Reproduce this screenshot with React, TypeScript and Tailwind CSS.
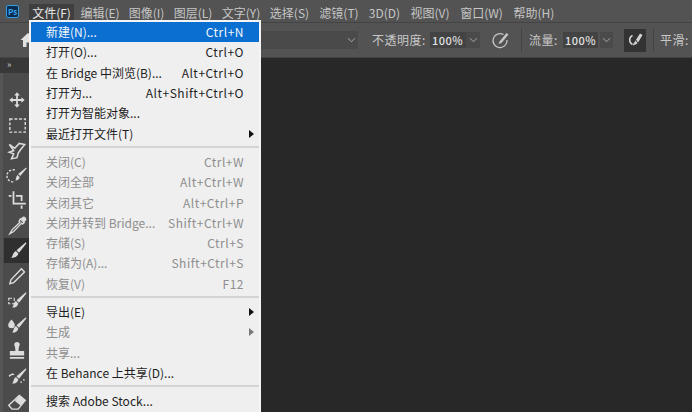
const FONT = 'font-["Noto_Sans_CJK_SC","Liberation_Sans",sans-serif]';

const MENUS = [
  ['文件(F)', 'w-[45px]'],
  ['编辑(E)', 'w-[48px] ml-[2px]'],
  ['图像(I)', 'w-[45px]'],
  ['图层(L)', 'w-[48px]'],
  ['文字(Y)', 'w-[48px]'],
  ['选择(S)', 'w-[49px]'],
  ['滤镜(T)', 'w-[50px]'],
  ['3D(D)', 'w-[41px]'],
  ['视图(V)', 'w-[50px]'],
  ['窗口(W)', 'w-[53px]'],
  ['帮助(H)', 'w-[50px] ml-[1px]'],
];

type Row = { label: string; key?: string; off?: boolean; arrow?: boolean; active?: boolean };

const GROUPS: Row[][] = [
  [
    { label: '新建(N)...', key: 'Ctrl+N', active: true },
    { label: '打开(O)...', key: 'Ctrl+O' },
    { label: '在 Bridge 中浏览(B)...', key: 'Alt+Ctrl+O' },
    { label: '打开为...', key: 'Alt+Shift+Ctrl+O' },
    { label: '打开为智能对象...' },
    { label: '最近打开文件(T)', arrow: true },
  ],
  [
    { label: '关闭(C)', key: 'Ctrl+W', off: true },
    { label: '关闭全部', key: 'Alt+Ctrl+W', off: true },
    { label: '关闭其它', key: 'Alt+Ctrl+P', off: true },
    { label: '关闭并转到 Bridge...', key: 'Shift+Ctrl+W', off: true },
    { label: '存储(S)', key: 'Ctrl+S', off: true },
    { label: '存储为(A)...', key: 'Shift+Ctrl+S', off: true },
    { label: '恢复(V)', key: 'F12', off: true },
  ],
  [
    { label: '导出(E)', arrow: true },
    { label: '生成', off: true, arrow: true },
    { label: '共享...', off: true },
    { label: '在 Behance 上共享(D)...' },
  ],
  [{ label: '搜索 Adobe Stock...' }],
];

function Chevron() {
  return (
    <svg width="9" height="6" viewBox="0 0 9 6" fill="none" stroke="#a8a8a8" strokeWidth="1">
      <path d="M1 1.2 4.5 4.8 8 1.2" />
    </svg>
  );
}

function Tool({ children, active }: { children: React.ReactNode; active?: boolean }) {
  return (
    <div className={`h-[25.2px] w-[25px] flex items-center justify-center ${active ? 'bg-[#2f2f2f]' : ''}`}>
      <svg width="22" height="22" viewBox="0 0 20 20" fill="#dcdcdc" stroke="none">
        {children}
      </svg>
    </div>
  );
}

const BRUSH = 'M17.5 2.5c.6-.5 1.2.1.8.8L11.8 11.5 9.6 9.4Z';

function Toolbar() {
  return (
    <div className="w-[29px] shrink-0 bg-[#4b4b4b] border-l-[3px] border-l-[#555555]">
      <div className="h-[15px] -ml-[3px] bg-[#383838] text-[#c8c8c8] text-[9px] leading-[13px] pl-[7px]">»</div>
      <div className="flex flex-col items-start pl-[1px] pt-[14px]">
        <Tool>
          <path d="M9.2 6h1.6v3.2H14V7.4l3 2.6-3 2.6v-1.8h-3.2V14h1.8L10 17l-2.6-3h1.8v-3.2H6v1.8L3 10l3-2.6v1.8h3.2V6H7.4L10 3l2.6 3Z" />
        </Tool>
        <Tool>
          <rect x="3.5" y="4.5" width="14" height="12" fill="none" stroke="#dcdcdc" strokeWidth="1.3" strokeDasharray="2.6 1.6" />
        </Tool>
        <Tool>
          <path d="M3 5l5 3.5L12 4l5 1-4 5-2 3-1 4-5 1 2-4.5L3 12l4-1.5Z" fill="none" stroke="#dcdcdc" strokeWidth="1.4" />
        </Tool>
        <Tool>
          <path d="M8 5.5A5.5 5.5 0 1 0 8 16" fill="none" stroke="#dcdcdc" strokeWidth="1.3" strokeDasharray="2 1.4" />
          <path d="M18 3.5c.5-.4 1 .1.7.6L13 11l-2-1.8ZM10.5 10l2 2c-.5 2-2 3-4 3 .9-1.500.4-3.700 2-5Z" />
        </Tool>
        <Tool>
          <path d="M6 2h1.600v10.400H18V14H6ZM2.500 5.500H5V7H2.500ZM9 5.500h6V11h-1.600V7H9ZM13.400 15H15v3h-1.600Z" />
        </Tool>
        <Tool>
          <path d="M13 3.500 16.500 7l-1.500 1.200-.8-.8L7 15l-3.500 2 2-3.500 7.200-7-.8-.8Z" fill="none" stroke="#dcdcdc" strokeWidth="1.200" />
          <path d="M14.500 2.200a2 2 0 0 1 3.300 3.300l-1.500 1.300-3.100-3.100Z" />
        </Tool>
        <Tool active>
          <path d={BRUSH} />
          <path d="M9 10l2.200 2.200c-.4 2.600-3 4.300-6.700 4 1.800-1 1.500-4.800 4.500-6.200Z" />
        </Tool>
        <Tool>
          <path d="M14 3.500 16.800 6.300 7 16l-3.500 1 1-3.500Z" fill="none" stroke="#dcdcdc" strokeWidth="1.300" />
        </Tool>
        <Tool>
          <path d={BRUSH} />
          <path d="M9 10l2.200 2.200c-.4 2.400-2.500 4-5.700 3.800 1.600-1 1-4.600 3.500-6Z" />
          <path d="M2.500 7.500h5v5h-5Z" fill="none" stroke="#dcdcdc" strokeWidth="1" strokeDasharray="3 1.500" />
        </Tool>
        <Tool>
          <path d={BRUSH} />
          <path d="M9 10l2.200 2.200c-.4 2.400-2.500 4-5.700 3.800 1.600-1 1-4.600 3.500-6Z" />
          <path d="M5 4c1.800 2.200 3 3.300 3 5a3 3 0 0 1-6 0c0-1.700 1.200-2.800 3-5Z" />
        </Tool>
        <Tool>
          <path d="M7.500 3.500a2.700 2.700 0 0 1 5 0c0 2-1.200 3-1 6.500h5V14h-13v-4h5c.2-3.500-1-4.500-1-6.500ZM3.500 15.500h13V17h-13Z" />
        </Tool>
        <Tool>
          <path d={BRUSH} />
          <path d="M9 10l2.200 2.200c-.4 2.400-2.500 4-5.700 3.800 1.600-1 1-4.600 3.500-6Z" />
          <path d="M2.500 8.500 6 6.500 8 8l-3 .5-2 1.500ZM13 14h1.500v1.200H13ZM15.500 12h1.500v1.200h-1.500Z" />
        </Tool>
        <Tool>
          <path d="M12 4l5.500 4.500-6.500 8H5.500L2.500 13Z" fill="none" stroke="#dcdcdc" strokeWidth="1.300" />
          <path d="M12 4l5.500 4.500-4 5L8 9Z" />
        </Tool>
      </div>
    </div>
  );
}

function OptionsBar() {
  return (
    <div className="h-[36px] bg-[#535353] border-y border-[#444444] flex items-center">
      <svg className="ml-[20px]" width="16" height="16" viewBox="0 0 16 16" fill="#e2e2e2">
        <path d="M8 1 15.500 8H13v7H9.500v-4.500h-3V15H3V8H.5Z" />
      </svg>
      {/* right side of the bar */}
      <div className="ml-auto flex items-center text-[12px] text-[#c8c8c8] tracking-[0.5px]">
        <div className="w-[100px] h-[18px] bg-[#4a4a4a] flex items-center justify-end pr-[2px] mr-[14px]"><Chevron /></div>
        <span className="w-[58px] whitespace-nowrap">不透明度:</span>
        <div className="w-[36px] h-[16px] bg-[#434343] text-[11px] leading-[16px] font-medium text-[#e0e0e0] pl-[2px]">100%</div>
        <div className="w-[14px] h-[16px] bg-[#4a4a4a] flex items-center justify-center"><Chevron /></div>
        <svg className="ml-[11px]" width="20" height="20" viewBox="0 0 20 20" fill="none" stroke="#c4c4c4" strokeWidth="1.300">
          <path d="M12.500 4.500A7 7 0 1 0 16 10" />
          <path d="M8.500 11.500 15.500 3l2 1.500-7 8.500-3 1Z" fill="#c4c4c4" stroke="none" />
        </svg>
        <div className="ml-[10px] w-px h-[24px] bg-[#444444]" />
        <span className="ml-[7px] w-[34px] whitespace-nowrap">流量:</span>
        <div className="w-[35px] h-[16px] bg-[#434343] text-[11px] leading-[16px] font-medium text-[#e0e0e0] pl-[2px]">100%</div>
        <div className="ml-[2px] w-[13px] h-[16px] bg-[#4a4a4a] flex items-center justify-center"><Chevron /></div>
        <div className="ml-[11px] w-[22px] h-[23px] bg-[#333333] flex items-center justify-center">
          <svg width="20" height="18" viewBox="0 0 20 18" fill="none" stroke="#d4d4d4" strokeWidth="1.500">
            <path d="M7.500 4.500a5 5 0 0 0 0 9" />
            <path d="M8 13.500 15 2.500l2.500 1.500-5 8.500-4.500 2Z" fill="#d4d4d4" stroke="none" />
            <path d="M9.500 7 14 14" stroke="#333333" strokeWidth="1" />
          </svg>
        </div>
        <div className="ml-[7px] w-px h-[24px] bg-[#444444]" />
        <span className="ml-[6px] w-[32px] whitespace-nowrap overflow-hidden">平滑:</span>
      </div>
    </div>
  );
}

function FileMenu() {
  return (
    <div className="absolute left-[29px] top-[20px] w-[232px] h-[392px] bg-[#efefef] border-x-2 border-t-2 border-[#f4f4f4] overflow-hidden">
      {GROUPS.map((group, g) => (
        <div key={g}>
          {g > 0 && <div className="h-[2px] mt-[2px] mb-[4px] bg-[#d4d4d4]" />}
          {group.map((row) => (
            <div
              key={row.label}
              className={`h-[20.3px] flex items-center justify-between pl-[15px] pr-[15px] text-[12px] leading-none whitespace-nowrap relative ${
                row.active ? 'bg-[#0b6fd1] text-[#f2f6fb]' : row.off ? 'text-[#8e8e8e]' : 'text-[#1e1e1e]'
              }`}
            >
              <span>{row.label}</span>
              {row.key && <span className="tracking-[0.5px]">{row.key}</span>}
              {row.arrow && (
                <span
                  className={`absolute right-[5px] w-0 h-0 border-y-[4px] border-y-transparent border-l-[5px] ${
                    row.off ? 'border-l-[#7a7a7a]' : 'border-l-[#111111]'
                  }`}
                />
              )}
            </div>
          ))}
        </div>
      ))}
    </div>
  );
}

export default function App() {
  return (
    <div className={`relative w-[692px] h-[412px] overflow-hidden bg-[#282828] flex flex-col ${FONT}`}>
      {/* menu bar */}
      <div className="h-[22px] shrink-0 bg-[#535353] flex items-end pb-[1px] pl-[29px] text-[12px] text-[#c6c6c6]">
        <div className="absolute left-[6px] top-[5px] w-[13px] h-[13px] rounded-[2px] bg-[#0b2c4c] border border-[#2f9de8] text-[#39a6f0] text-[8px] leading-[11px] font-bold text-center">
          Ps
        </div>
        {MENUS.map(([name, w], i) => (
          <div key={name} className={`${w} h-[17px] leading-[17px] text-center whitespace-nowrap ${i === 0 ? 'bg-[#3f3f3f] text-[#e8e8e8]' : ''}`}>
            {name}
          </div>
        ))}
      </div>
      <OptionsBar />
      <div className="flex-1 flex min-h-0">
        <Toolbar />
      </div>
      <FileMenu />
    </div>
  );
}
